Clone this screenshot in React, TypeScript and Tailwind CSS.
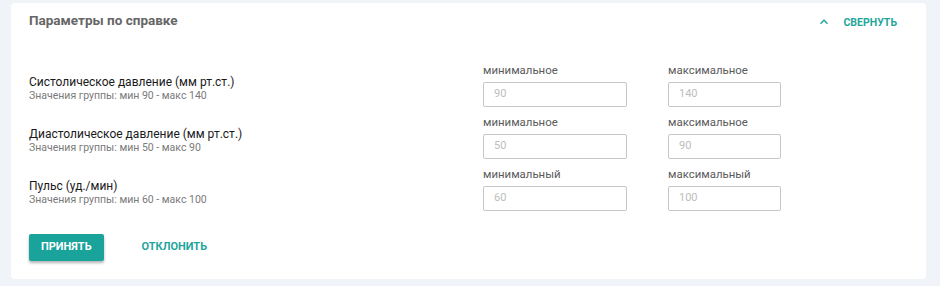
import React from "react";

const rows = [
  {
    title: "Систолическое давление (мм рт.ст.)",
    sub: "Значения группы: мин 90 - макс 140",
    minLabel: "минимальное",
    maxLabel: "максимальное",
    min: "90",
    max: "140",
  },
  {
    title: "Диастолическое давление (мм рт.ст.)",
    sub: "Значения группы: мин 50 - макс 90",
    minLabel: "минимальное",
    maxLabel: "максимальное",
    min: "50",
    max: "90",
  },
  {
    title: "Пульс (уд./мин)",
    sub: "Значения группы: мин 60 - макс 100",
    minLabel: "минимальный",
    maxLabel: "максимальный",
    min: "60",
    max: "100",
  },
];

function Field({ label, value, width }: { label: string; value: string; width: string }) {
  return (
    <div className="flex flex-col">
      <div className="text-[11.4px] leading-[16px] text-[#5a5a5a]">{label}</div>
      <div
        className={`mt-[4px] h-[25px] ${width} rounded-[2px] border border-[#c6c6c6] bg-white pl-[10px] flex items-center text-[11px] text-[#bdbdbd]`}
      >
        {value}
      </div>
    </div>
  );
}

export default function App() {
  return (
    <div
      className="w-[940px] h-[286px] bg-[#f0f3f7] pt-[3px] pl-[11px]"
      style={{ fontFamily: "Roboto, 'Noto Sans', sans-serif" }}
    >
      <div className="w-[915px] h-[276px] bg-white rounded-[4px] pt-[7px] pl-[18px] pr-[29px]">
        <div className="flex items-start justify-between h-[20px]">
          <div className="text-[13.5px] leading-[20px] font-bold text-[#666666]">Параметры по справке</div>
          <div className="flex items-center mt-[5px] text-[#1fa59c]">
            <svg width="16" height="16" viewBox="0 0 24 24" className="mr-[11px] -mt-[1px]">
              <path d="M12 8l-6 6 1.41 1.41L12 10.83l4.59 4.58L18 14z" fill="currentColor" />
            </svg>
            <span className="text-[10.5px] leading-[14px] font-bold">СВЕРНУТЬ</span>
          </div>
        </div>

        <div className="mt-[32px] grid grid-cols-[413px_144px_113px] gap-x-[41px] gap-y-[7px]">
          {rows.map((r, i) => (
            <React.Fragment key={i}>
              <div className="pt-[13px]">
                <div className="text-[12px] leading-[14px] text-[#1a1a1a]">{r.title}</div>
                <div className="text-[10.5px] leading-[13px] text-[#7a7a7a]">{r.sub}</div>
              </div>
              <Field label={r.minLabel} value={r.min} width="w-[144px]" />
              <Field label={r.maxLabel} value={r.max} width="w-[113px]" />
            </React.Fragment>
          ))}
        </div>

        <div className="mt-[23px] flex items-center">
          <button className="h-[27px] px-[12px] rounded-[2px] bg-[#1aa39b] text-white text-[11px] font-bold shadow-[0_2px_3px_rgba(0,0,0,0.3)]">
            ПРИНЯТЬ
          </button>
          <button className="ml-[26px] h-[27px] px-[12px] text-[#1fa59c] text-[11px] font-bold">
            ОТКЛОНИТЬ
          </button>
        </div>
      </div>
    </div>
  );
}
